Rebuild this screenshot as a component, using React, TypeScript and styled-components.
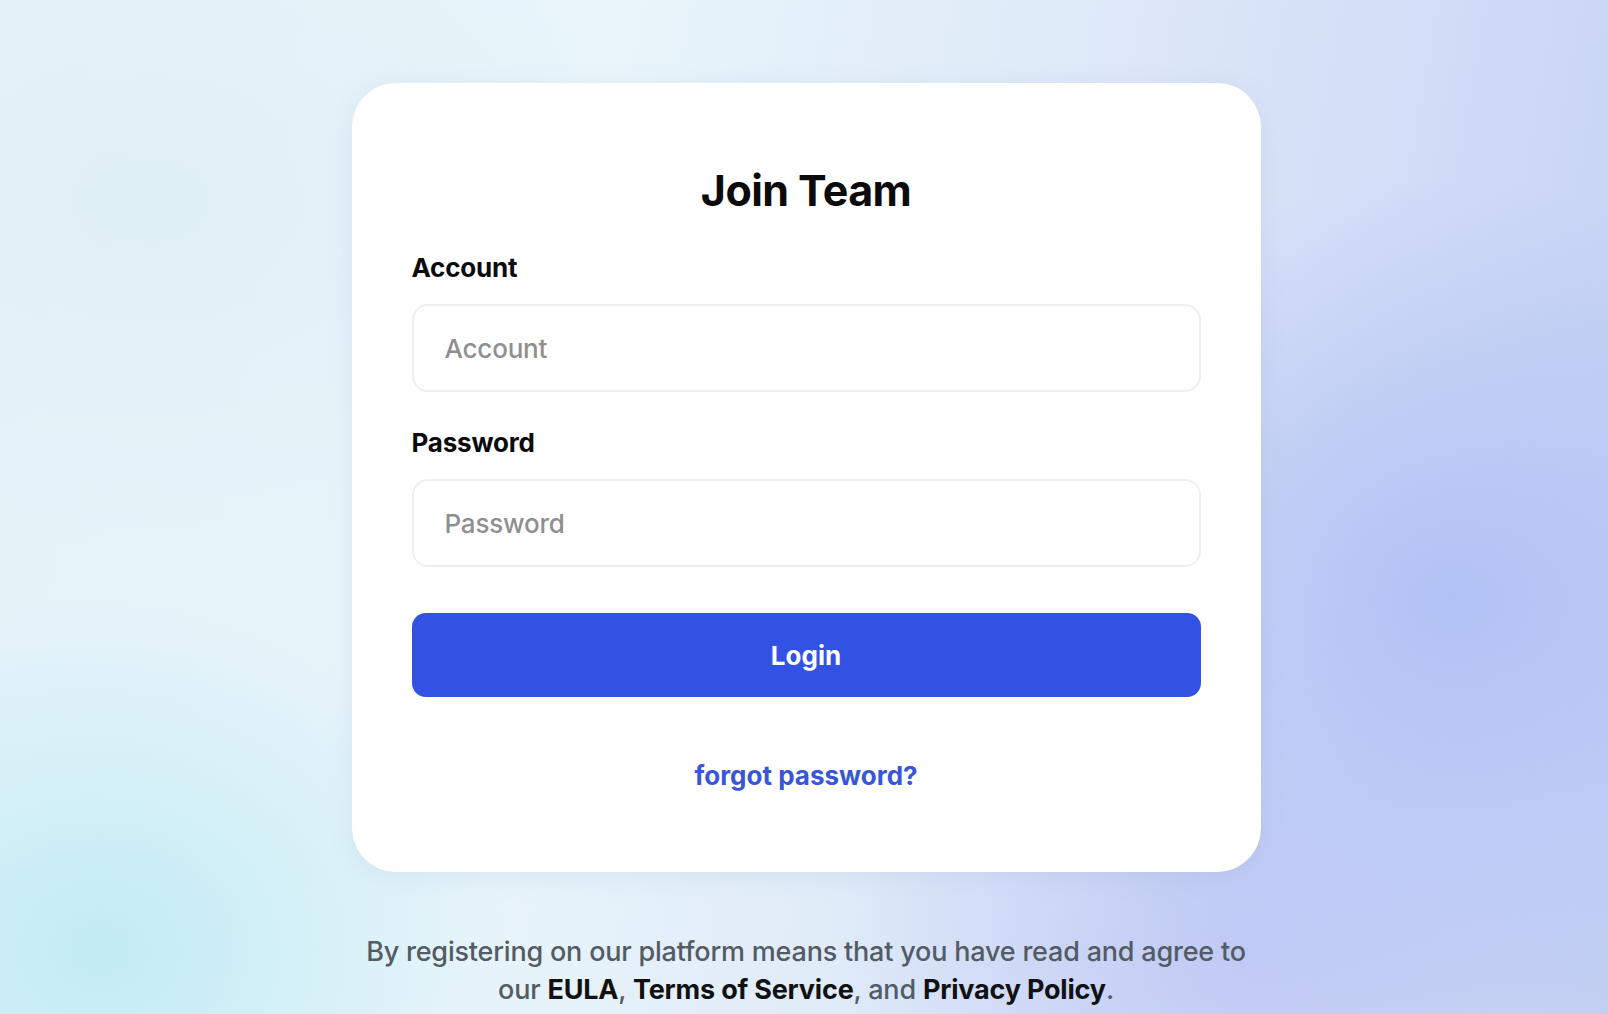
import React from "react";
import styled, { createGlobalStyle } from "styled-components";

const GlobalStyle = createGlobalStyle`
  html, body { margin: 0; padding: 0; }
  body {
    font-family: Inter, "Noto Sans", "Liberation Sans", sans-serif;
    -webkit-font-smoothing: antialiased;
  }
  * { box-sizing: border-box; }
`;

const Page = styled.div`
  width: 100%;
  height: 1014px;
  overflow: hidden;
  display: flex;
  flex-direction: column;
  align-items: center;
  padding-top: 83px;
  background:
    radial-gradient(ellipse 700px 600px at 1450px 600px, rgba(176, 192, 244, 0.95), rgba(176, 192, 244, 0) 70%),
    radial-gradient(ellipse 600px 500px at 1250px 950px, rgba(190, 200, 245, 0.9), rgba(190, 200, 245, 0) 70%),
    radial-gradient(ellipse 600px 500px at 100px 950px, rgba(190, 235, 245, 0.9), rgba(190, 235, 245, 0) 70%),
    radial-gradient(ellipse 700px 500px at 150px 200px, rgba(224, 240, 247, 1), rgba(224, 240, 247, 0) 70%),
    linear-gradient(100deg, #e6f3f9 0%, #e9f5fa 35%, #dde7f8 65%, #c3d0f4 100%);
`;

const Card = styled.div`
  width: 909px;
  margin-left: 4px;
  background: #ffffff;
  border-radius: 44px;
  padding: 83px 60px 80px;
  display: flex;
  flex-direction: column;
  box-shadow: 0 4px 24px rgba(120, 140, 180, 0.12);
`;

const Title = styled.h1`
  margin: 0 0 38px;
  text-align: center;
  font-size: 43px;
  line-height: 48px;
  font-weight: 700;
  color: #0b0b0b;
  letter-spacing: -0.6px;
`;

const Field = styled.div<{ $gap?: number }>`
  display: flex;
  flex-direction: column;
  gap: 20px;
  margin-bottom: ${(p) => p.$gap ?? 0}px;
`;

const Label = styled.label`
  font-size: 26px;
  line-height: 32px;
  font-weight: 650;
  color: #0b0b0b;
  letter-spacing: -0.2px;
`;

const Input = styled.input`
  width: 100%;
  height: 88px;
  border: 2px solid #efefef;
  border-radius: 16px;
  padding: 0 31px;
  font-family: inherit;
  font-size: 26px;
  font-weight: 500;
  color: #222;
  background: #fff;
  outline: none;
  letter-spacing: -0.2px;
  &::placeholder {
    color: #8f8f8f;
  }
`;

const Button = styled.button`
  margin-top: 46px;
  height: 84px;
  width: 100%;
  border: none;
  border-radius: 14px;
  background: #3152e3;
  color: #ffffff;
  font-family: inherit;
  font-size: 26px;
  font-weight: 650;
  cursor: pointer;
`;

const Forgot = styled.a`
  margin-top: 63px;
  align-self: center;
  font-size: 26px;
  line-height: 32px;
  font-weight: 650;
  color: #3a56d8;
  text-decoration: none;
  cursor: pointer;
`;

const Footer = styled.p`
  margin: 61px 0 0;
  margin-left: 4px;
  width: 912px;
  text-align: center;
  font-size: 27px;
  line-height: 38px;
  font-weight: 500;
  color: #535b66;
  letter-spacing: -0.2px;
`;

const Strong = styled.b`
  font-weight: 650;
  color: #111111;
`;

export default function App() {
  return (
    <>
      <GlobalStyle />
      <Page>
        <Card>
          <Title>Join Team</Title>
          <Field $gap={35}>
            <Label>Account</Label>
            <Input placeholder="Account" />
          </Field>
          <Field>
            <Label>Password</Label>
            <Input type="password" placeholder="Password" />
          </Field>
          <Button>Login</Button>
          <Forgot>forgot password?</Forgot>
        </Card>
        <Footer>
          By registering on our platform means that you have read and agree to
          our <Strong>EULA</Strong>, <Strong>Terms of Service</Strong>, and{" "}
          <Strong>Privacy Policy</Strong>.
        </Footer>
      </Page>
    </>
  );
}
